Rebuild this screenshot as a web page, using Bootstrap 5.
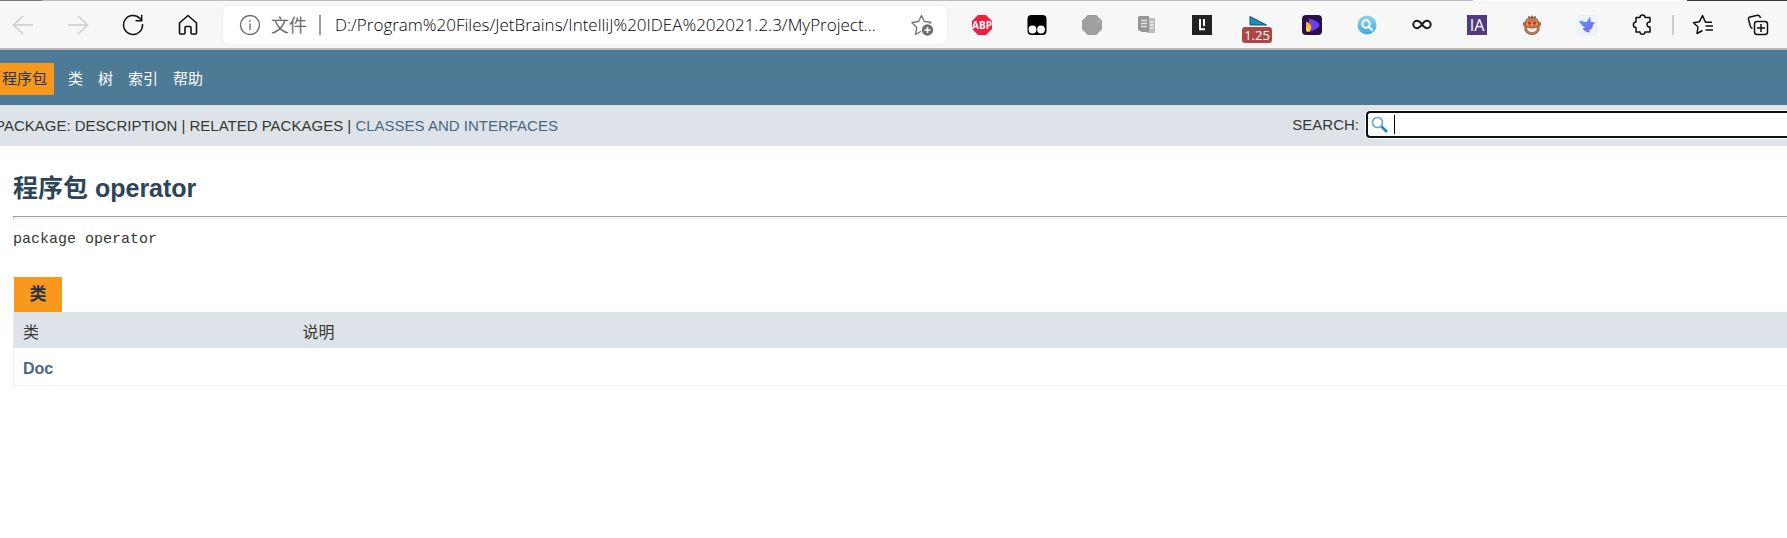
<!DOCTYPE html>
<html lang="zh-CN">
<head>
<meta charset="utf-8">
<meta name="viewport" content="width=device-width, initial-scale=1">
<title>operator</title>
<link href="https://cdn.jsdelivr.net/npm/bootstrap@5.3.0/dist/css/bootstrap.min.css" rel="stylesheet">
<style>
body{font-family:"Liberation Sans","Noto Sans CJK SC",sans-serif;font-size:15px;line-height:20px;color:#353833;background:#fff;overflow-x:hidden}
a{text-decoration:none;color:#4a6782}
.edge-top{height:1px}
.edge-a{width:42px;background:#777}
.edge-b{background:#bcbcbc}
.edge-c{width:214px}
.edge-d{width:100px;background:#333}
.toolbar{background:#f7f7f7;height:49px;border-bottom:2px solid #bbb;padding:0 7px 0 1px}
.tool{width:44px;height:38px;padding:0;border:0;background:none;position:relative;flex:none;display:flex;align-items:center;justify-content:center}
.tools{gap:11px}
.tool svg{display:block}
.address{height:38px;background:#fff;border-radius:6px;margin:0 13px;padding:0 13px 0 16px;box-shadow:0 0 3px #e6e6e6;font-family:"Noto Sans","Noto Sans CJK SC",sans-serif;font-size:18px}
.scheme{color:#6b6b6b;margin-left:10px}
.bar-line{width:2px;height:20px;background:#999;margin:0 14px 0 12px}
.url{border:0;padding:0;outline:0;color:#000;font-family:"Open Sans","Noto Sans",sans-serif;font-size:17px;font-weight:300;min-width:0;background:none}
.tool-line{width:2px;height:20px;background:#ccc;margin:0 7px 0 8px}
.speed{position:absolute;left:7px;top:21px;width:30px;height:16px;border-radius:3px;background:#ad4545;color:#fff;font:13px/16px "Open Sans",sans-serif;text-align:center}
.topnav{background:#4d7a97;height:55px;gap:15px;padding-top:3px}
.topnav a{color:#fff}
.topnav .current{background:#f8981d;color:#253441;height:32px;line-height:32px;padding:0 7px 0 2px}
.topnav .current+a{margin-left:-1px}
.subnav{background:#dee3e9;height:41px}
.trail{margin-left:-5px}
.search-group{gap:7px;margin-bottom:2px}
.search-box{width:421px}
.search-box input{width:100%;height:27px;border:2px solid #101010;border-right:0;border-radius:4px 0 0 4px;padding:0 4px 0 26px;background:#fff;box-shadow:0 0 0 1px #fff;outline:0}
.search-box svg{position:absolute;left:5px;top:5px}
.caret-bar{position:absolute;left:28px;top:4px;width:1px;height:19px;background:#000}
main{padding-left:13px}
.page-title{font-size:25px;line-height:30px;font-weight:700;color:#2c4557;margin:27px 0 13px}
.rule{height:3px;border:1px solid #eee;border-top-color:#9a9a9a;border-left-color:#9a9a9a;border-right:0;opacity:1;margin:0}
.signature{font-family:"Liberation Mono",monospace;margin:11px 0 27px}
.tab-btn{border:0;background:#f8981d;color:#253441;font-weight:700;font-size:17px;line-height:36px;width:48px;height:35px;padding:0;margin-left:1px;display:block}
.summary{width:100%;border-left:1px solid #eee;border-bottom:1px solid #eee;font-size:16px;table-layout:fixed}
.summary th,.summary td{padding:6px 9px 0;line-height:30px;height:36px}
.summary th{background:#dee3e9;font-weight:400}
.summary td{height:37px;line-height:30px}
.summary th:first-child{width:280px}
</style>
</head>
<body>
<header>
<div class="edge-top d-flex"><div class="edge-a"></div><div class="edge-b flex-grow-1"></div><div class="edge-c"></div><div class="edge-d"></div></div>
<div class="toolbar d-flex align-items-center">
  <div class="tools d-flex">
    <button class="tool" aria-label="后退"><svg width="22" height="22" fill="none" stroke="#ccc" stroke-width="1.5"><path d="M21 11H1M11 2L1.500 11L11 20"/></svg></button>
    <button class="tool" aria-label="前进"><svg width="22" height="22" fill="none" stroke="#ccc" stroke-width="1.5"><path d="M1 11H21M11 2L20.500 11L11 20"/></svg></button>
    <button class="tool" aria-label="刷新"><svg width="22" height="22" fill="none" stroke="#111" stroke-width="1.500"><path d="M20.500 10A9.500 9.500 0 1 1 18 4.500L20 6.500M19.700 .8V6.800H13.500"/></svg></button>
    <button class="tool" aria-label="主页"><svg width="20" height="22" fill="none" stroke="#111" stroke-width="1.600" stroke-linejoin="round"><path d="M1.500 9L10 1.500L18.500 9V19Q18.500 20 17.500 20H14Q13 20 13 19V13.500Q13 12.500 12 12.500H8Q7 12.500 7 13.500V19Q7 20 6 20H2.500Q1.500 20 1.500 19Z"/></svg></button>
  </div>
  <div class="address d-flex align-items-center flex-grow-1">
    <svg class="flex-shrink-0" width="22" height="22" fill="none" stroke="#707070" stroke-width="1.400"><circle cx="11" cy="11" r="9.500"/><path d="M11 9.500V16M11 6V7.800"/></svg>
    <label for="url" class="scheme flex-shrink-0">文件</label>
    <span class="bar-line flex-shrink-0"></span>
    <input id="url" class="url flex-grow-1" type="text" value="D:/Program%20Files/JetBrains/IntelliJ%20IDEA%202021.2.3/MyProject...">
    <button class="border-0 bg-transparent p-0 flex-shrink-0" aria-label="收藏"><svg class="d-block" width="23" height="22" fill="none"><path d="M10.500 1.500L13.300 7.500L20 8.300L15.500 12.500L10.500 17L4.500 20.500L5.700 13.500L1 8.500L7.600 7.500Z" stroke="#777" stroke-width="1.400" stroke-linejoin="round"/><circle cx="16.500" cy="16" r="6.700" fill="#fff"/><circle cx="16.500" cy="16" r="5.700" fill="#6e6e6e"/><path d="M16.500 13V19M13.500 16H19.500" stroke="#fff" stroke-width="1.500"/></svg></button>
  </div>
  <div class="tools d-flex">
    <button class="tool" aria-label="ABP"><svg width="20" height="20"><path d="M6 0H14L20 6V14L14 20H6L0 14V6Z" fill="#f01d45"/><text x="10" y="14" text-anchor="middle" font-family="Open Sans" font-weight="700" font-size="10" fill="#fff">ABP</text></svg></button>
    <button class="tool" aria-label="脚本"><svg width="20" height="20"><rect x=".5" width="19" height="20" rx="4"/><circle cx="5.500" cy="14.500" r="3.900" fill="#fff"/><circle cx="14" cy="14.500" r="3.900" fill="#fff"/></svg></button>
    <button class="tool" aria-label="拦截"><svg width="20" height="20"><rect width="20" height="20" fill="#fff"/><path d="M6 0H14L20 6V14L14 20H6L0 14V6Z" fill="#a0a0a0" stroke="#929292" stroke-width=".5"/><path d="M15 6L18 5.500L17 8" fill="#b7b7b7"/></svg></button>
    <button class="tool" aria-label="文档"><svg width="20" height="20"><path d="M9 3H18V18H10L8 16Z" fill="#bdbdbd"/><path d="M2 1H12V17H5L1 15V2Z" fill="#969696"/><path d="M4 5.500H10M4 8.500H10M4 11.500H10" stroke="#e4e4e4" stroke-width="1.300"/><path d="M13 7H16.500M13 10H16.500M13 13H16.500" stroke="#eee" stroke-width="1.300"/></svg></button>
    <button class="tool" aria-label="LI"><svg width="20" height="20"><rect width="20" height="20" fill="#222"/><path d="M8 4V14.200H13M12 4V11" stroke="#fff" stroke-width="2" fill="none"/></svg></button>
    <button class="tool" aria-label="视频速度"><svg width="20" height="20"><path d="M3 1.500L19.500 10H3Z" fill="#1790bd" stroke="#1c5166"/></svg><span class="speed">1.25</span></button>
    <button class="tool" aria-label="播放"><svg width="20" height="20"><defs><linearGradient id="play"><stop stop-color="#8b39d2"/><stop offset="1" stop-color="#5445ff"/></linearGradient><linearGradient id="gold" x2="0" y2="1"><stop stop-color="#ff941c"/><stop offset="1" stop-color="#ffe343"/></linearGradient></defs><rect width="20" height="20" rx="4" fill="#29104b"/><path d="M6 3Q17 6 17.500 10Q17 14 7 17V3" fill="url(#play)"/><path d="M4 6.500C9 8 11 12 7.500 16.500Q4 18 4 14Z" fill="url(#gold)"/></svg></button>
    <button class="tool" aria-label="查找"><svg width="20" height="20"><defs><linearGradient id="sky" x2="0" y2="1"><stop stop-color="#8ed4ee"/><stop offset="1" stop-color="#4aa8dc"/></linearGradient></defs><circle cx="10" cy="10" r="9.500" fill="url(#sky)"/><circle cx="9" cy="9" r="3.700" fill="none" stroke="#fff" stroke-width="1.900"/><path d="M11.700 11.700L15 15" stroke="#fff" stroke-width="2.300" stroke-linecap="round"/></svg></button>
    <button class="tool" aria-label="无限"><svg width="20" height="20" fill="none" stroke="#1b1b1b" stroke-width="2"><path d="M10 9.500C7.500 5.800 6.500 5.800 5 5.800A3.700 3.700 0 0 0 5 13.200C6.500 13.200 7.500 13.200 10 9.500C12.500 5.800 13.500 5.800 15 5.800A3.700 3.700 0 0 1 15 13.200C13.500 13.200 12.500 13.200 10 9.500Z"/></svg></button>
    <button class="tool" aria-label="IA"><svg width="20" height="20"><rect width="20" height="20" fill="#523b7c"/><text x="10" y="16" text-anchor="middle" font-family="Open Sans" font-size="16" fill="#fff">IA</text></svg></button>
    <button class="tool" aria-label="猴子"><svg width="20" height="20"><path d="M7 4L6 1L9 2L10 0L11 2L14 1L13 4" fill="#654"/><circle cx="3" cy="9" r="2.300" fill="#bd7045"/><circle cx="17" cy="9" r="2.300" fill="#bd7045"/><path d="M10 2.500C15 2.500 17 5 16.500 9C19 16 15 19.500 10 19.500C5 19.500 1 16 3.500 9C3 5 5 2.500 10 2.500" fill="#c77a4c" stroke="#774d35" stroke-width=".7"/><path d="M5 8Q7.500 5 10 8Q12.500 5 15 8V10H5" fill="#edbd90"/><circle cx="7.500" cy="8.300" r="1.700" fill="#f02319"/><circle cx="12.500" cy="8.300" r="1.700" fill="#f02319"/><path d="M4.500 12Q10 14.500 15.500 12Q15 17.500 10 17.500Q5 17.500 4.500 12" fill="#fff" stroke="#6e4736" stroke-width=".6"/><path d="M7.500 13V17M10 13.500V17.500M12.500 13V17" stroke="#bbb" stroke-width=".5"/></svg></button>
    <button class="tool" aria-label="飞鸟"><svg width="20" height="20"><defs><linearGradient id="bird" x2="1" y2="1"><stop stop-color="#3ca9ff"/><stop offset="1" stop-color="#9a54ef"/></linearGradient></defs><rect x=".5" y=".5" width="19" height="19" rx="2" fill="#edf4ff" stroke="#e5edf8"/><path d="M2 5.500L9.500 7.300L13 1.800L14 7L18.500 7.500L16 9.500C16 13 14 15 11.500 15L13.500 17.500C10 17.500 7 16 5.500 13.500L8 12.500C5 11 3 8.500 2 5.500" fill="url(#bird)"/></svg></button>
    <button class="tool" aria-label="扩展"><svg width="22" height="22" fill="none" stroke="#111" stroke-width="1.500" stroke-linejoin="round"><path d="M5 3.500H9C9 .2 14 .2 14 3.500H19V8C15 7.500 15 13.500 19 13V18H14C14 21 9 21 9 18H5V13.500C1.500 13.500 1.500 8 5 8Z"/></svg></button>
  </div>
  <span class="tool-line flex-shrink-0"></span>
  <div class="tools d-flex">
    <button class="tool" aria-label="收藏夹"><svg width="22" height="22" fill="none" stroke="#111" stroke-width="1.500" stroke-linejoin="round"><path d="M20 8.300H13.500L10.500 1.500L7.500 7.700L1.500 8.700L6 13L5 19.500L10.500 16.500M13.500 12H21M13.500 16H21"/></svg></button>
    <button class="tool" aria-label="集锦"><svg width="22" height="22" fill="none" stroke="#111" stroke-width="1.500"><path d="M5.500 14.500Q4 14 3.500 12.500L1.500 5.500Q1 3.500 3 3L10.500 1.200Q12.500 1 13.500 4"/><rect x="7.500" y="7.500" width="13" height="13" rx="2.500"/><path d="M14 10V18M10 14H18"/></svg></button>
  </div>
</div>
</header>
<nav class="topnav d-flex align-items-center">
  <a class="current" href="#">程序包</a><a href="#">类</a><a href="#">树</a><a href="#">索引</a><a href="#">帮助</a>
</nav>
<div class="subnav d-flex align-items-center justify-content-between">
  <div class="trail">PACKAGE: DESCRIPTION | RELATED PACKAGES | <a href="#classes">CLASSES AND INTERFACES</a></div>
  <div class="search-group d-flex align-items-center">
    <label for="search">SEARCH:</label>
    <div class="search-box position-relative d-flex">
      <input id="search" type="text">
      <svg width="18" height="18" fill="none"><circle cx="6.500" cy="6.500" r="5" stroke="#6ba9cb" stroke-width="1.700"/><path d="M10.500 10.500L16 16" stroke="#1e86bd" stroke-width="2.700"/></svg>
      <span class="caret-bar"></span>
    </div>
  </div>
</div>
<main>
  <h1 class="page-title">程序包 operator</h1>
  <hr class="rule">
  <div class="signature">package operator</div>
  <section id="classes">
    <button class="tab-btn">类</button>
    <table class="summary">
      <thead><tr><th>类</th><th>说明</th></tr></thead>
      <tbody><tr><td><a class="fw-bold" href="#">Doc</a></td><td></td></tr></tbody>
    </table>
  </section>
</main>
<script src="https://cdn.jsdelivr.net/npm/bootstrap@5.3.0/dist/js/bootstrap.bundle.min.js"></script>
</body>
</html>
